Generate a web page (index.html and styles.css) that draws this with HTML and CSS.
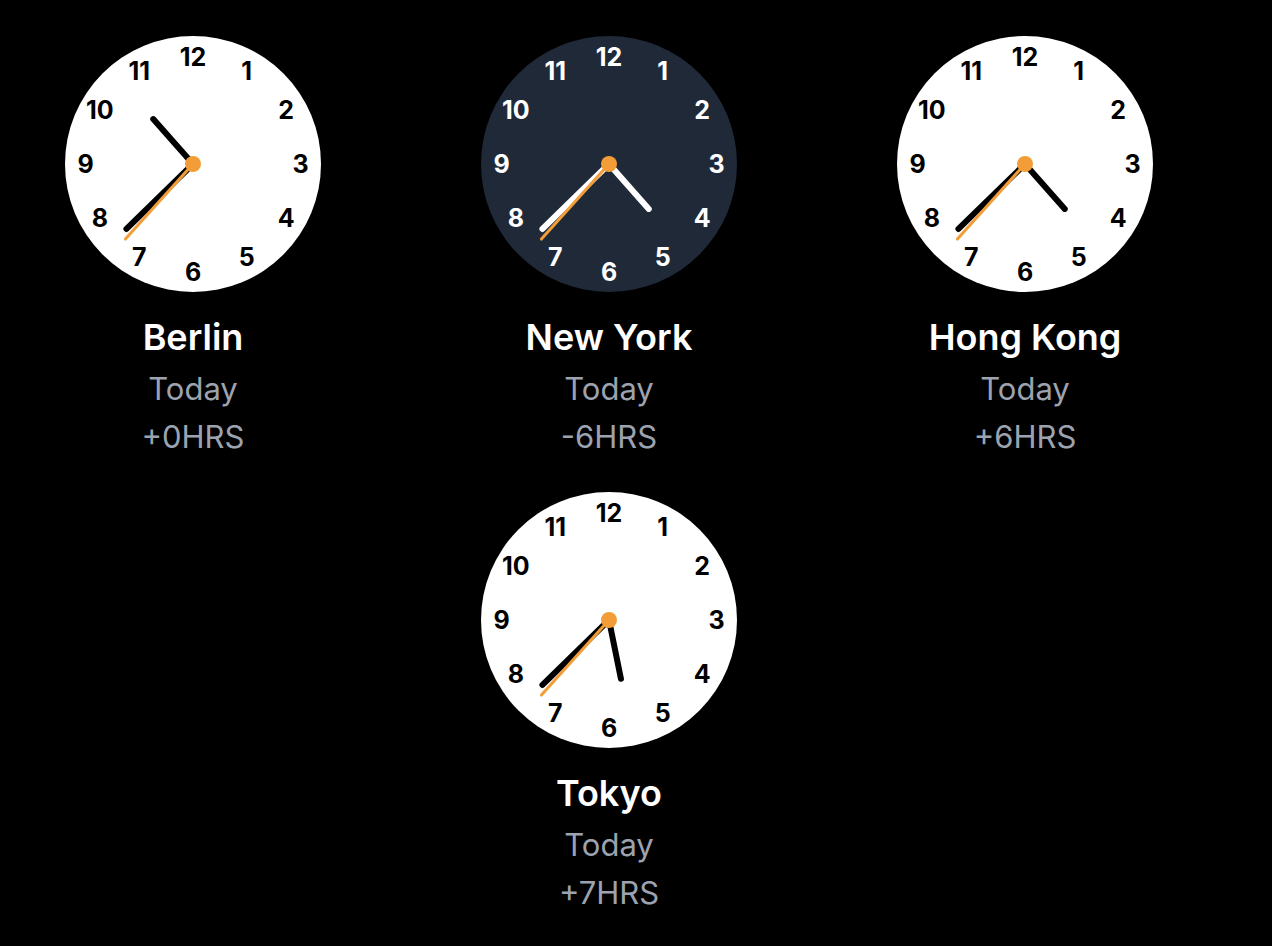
FILE: index.html
```html
<!DOCTYPE html>
<html lang="en">
<head>
    <meta charset="UTF-8">
    <meta name="viewport" content="width=device-width, initial-scale=1.0">
    <title>World Clock</title>
    <link rel="stylesheet" href="styles.css">
</head>
<body>
    <div class="clocks" id="clocks"></div>

    <script>
        const SVG_NS = "http://www.w3.org/2000/svg";
        // Reference time in Berlin
        const base = { h: 10, m: 37, s: 37 };
        const cities = [
            { name: "Berlin", offset: 0 },
            { name: "New York", offset: -6 },
            { name: "Hong Kong", offset: 6 },
            { name: "Tokyo", offset: 7 }
        ];

        function el(tag, attrs) {
            const node = document.createElementNS(SVG_NS, tag);
            for (const key in attrs) node.setAttribute(key, attrs[key]);
            return node;
        }

        function hand(angle, length, cls) {
            const rad = angle * Math.PI / 180;
            return el("line", {
                x1: 128, y1: 128,
                x2: 128 + Math.sin(rad) * length,
                y2: 128 - Math.cos(rad) * length,
                class: cls
            });
        }

        function buildClock(city) {
            const hours = (base.h + city.offset + 24) % 24;
            const dark = hours < 6 || hours >= 20;

            const svg = el("svg", { width: 256, height: 256, viewBox: "0 0 256 256", class: dark ? "face dark" : "face" });
            svg.appendChild(el("circle", { cx: 128, cy: 128, r: 128, class: "dial" }));

            for (let i = 1; i <= 12; i++) {
                const rad = i * 30 * Math.PI / 180;
                const label = el("text", {
                    x: 128 + Math.sin(rad) * 107.5,
                    y: 128 - Math.cos(rad) * 107.5 + 9,
                    class: "num"
                });
                label.textContent = i;
                svg.appendChild(label);
            }

            const hourAngle = (hours % 12) * 30 + base.m * 0.5;
            svg.appendChild(hand(hourAngle, 60, "hand"));
            svg.appendChild(hand(base.m * 6 + base.s * 0.1, 93, "hand"));
            svg.appendChild(hand(base.s * 6, 101, "second"));
            svg.appendChild(el("circle", { cx: 128, cy: 128, r: 8, class: "pin" }));
            return svg;
        }

        const container = document.getElementById("clocks");
        cities.forEach(city => {
            const item = document.createElement("div");
            item.className = "clock";
            item.appendChild(buildClock(city));

            const name = document.createElement("div");
            name.className = "city";
            name.textContent = city.name;
            item.appendChild(name);

            const day = document.createElement("div");
            day.className = "meta day";
            day.textContent = "Today";
            item.appendChild(day);

            const diff = document.createElement("div");
            diff.className = "meta";
            diff.textContent = (city.offset < 0 ? "-" : "+") + Math.abs(city.offset) + "HRS";
            item.appendChild(diff);

            container.appendChild(item);
        });
    </script>
</body>
</html>
```

FILE: styles.css
```css
body {
    margin: 0;
    background-color: #000;
    font-family: "Inter", "Liberation Sans", sans-serif;
}
.clocks {
    width: 1218px;
    padding-top: 36px;
    display: flex;
    flex-wrap: wrap;
    justify-content: center;
    column-gap: 96px;
    row-gap: 31px;
}
.clock {
    width: 320px;
    display: flex;
    flex-direction: column;
    align-items: center;
}
.face {
    display: block;
}
.dial {
    fill: #fff;
}
.num {
    font-family: "Inter", sans-serif;
    font-size: 25px;
    font-weight: 700;
    text-anchor: middle;
    fill: #000;
}
.hand {
    stroke: #000;
    stroke-width: 6;
    stroke-linecap: round;
}
.second {
    stroke: #f29d38;
    stroke-width: 3;
    stroke-linecap: round;
}
.pin {
    fill: #f29d38;
}
.face.dark .dial {
    fill: #1f2937;
}
.face.dark .num {
    fill: #fff;
}
.face.dark .hand {
    stroke: #fff;
}
.city {
    margin-top: 25px;
    color: #fff;
    font-size: 36px;
    font-weight: 600;
    line-height: 40px;
}
.meta {
    color: #9ca3af;
    font-size: 31px;
    line-height: 48px;
}
.day {
    margin-top: 8px;
}
```
